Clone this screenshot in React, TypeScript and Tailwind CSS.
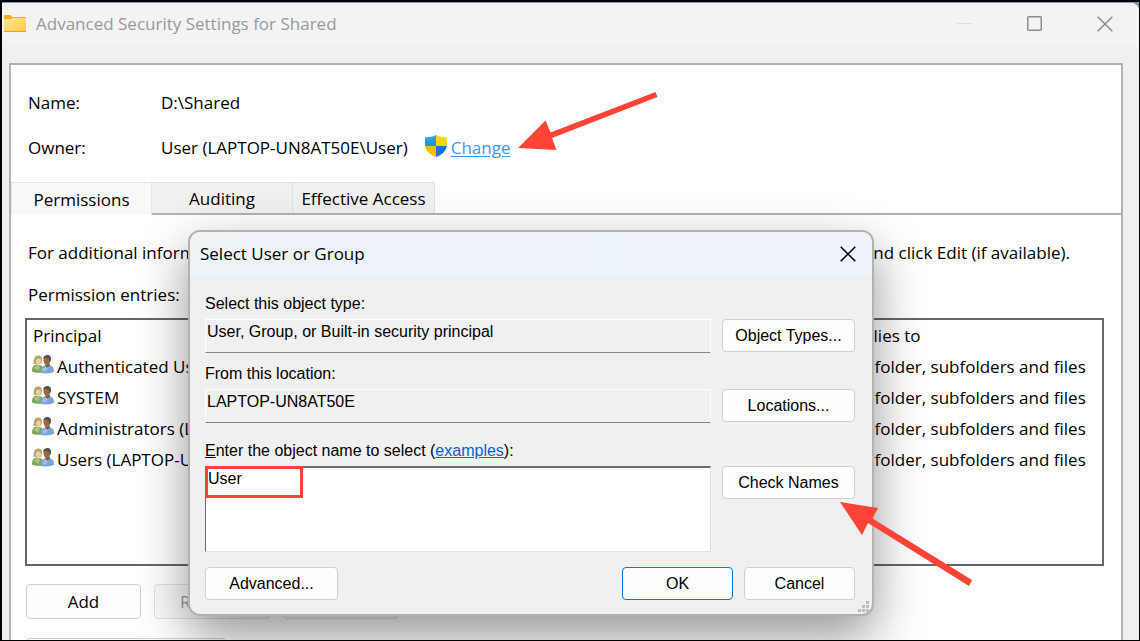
import React from "react";

const entries = [
  "Authenticated Users",
  "SYSTEM",
  "Administrators (LAPTOP-UN8AT50E\\Administrators)",
  "Users (LAPTOP-UN8AT50E\\Users)",
];

function FolderIcon() {
  return (
    <svg width="22" height="18" viewBox="0 0 22 18" aria-hidden="true">
      <defs>
        <linearGradient id="folder" x1="0" y1="0" x2="1" y2="1">
          <stop offset="0" stopColor="#ffe79b" />
          <stop offset="1" stopColor="#fcca3e" />
        </linearGradient>
      </defs>
      <path d="M0 1.2Q0 0 1.2 0H6.4L8.4 2H21Q22 2 22 3V16H0Z" fill="#f5b01d" />
      <path d="M0 4.2H7L8.6 3H22V16.4H0Z" fill="url(#folder)" />
      <path d="M0 16H22V17H0Z" fill="#e6a11c" />
    </svg>
  );
}

function ShieldIcon() {
  return (
    <svg width="22" height="22" viewBox="0 0 22 22" aria-hidden="true">
      <defs>
        <clipPath id="shield">
          <path d="M11 0C14 1.8 18 2.4 22 2.4V9C22 15.5 17 20 11 22C5 20 0 15.5 0 9V2.4C4 2.4 8 1.8 11 0Z" />
        </clipPath>
        <linearGradient id="shieldBlue" x1="0" y1="0" x2="0" y2="1">
          <stop offset="0" stopColor="#2ba8ea" />
          <stop offset="1" stopColor="#1b93dc" />
        </linearGradient>
      </defs>
      <g clipPath="url(#shield)">
        <rect width="11" height="11" fill="url(#shieldBlue)" />
        <rect x="11" width="11" height="11" fill="#ffd500" />
        <rect y="11" width="11" height="11" fill="#fdbc06" />
        <rect x="11" y="11" width="11" height="11" fill="#0f7ad2" />
      </g>
    </svg>
  );
}

function UsersIcon() {
  return (
    <svg width="22" height="19" viewBox="0 0 22 19" aria-hidden="true" className="shrink-0">
      <path d="M0 16.5C0 12 1.5 10 5 9.6L10 10.8L11 17.2C7 18.2 3 18 0 16.5Z" fill="#7da655" />
      <path d="M1.8 13C3 11 4.5 10.4 6 10.2L8 12L6.5 16Z" fill="#a4c77e" />
      <path d="M1.4 8.6C2.2 7 1.2 1 5.6 0.6C8.6 0.3 10.2 2 10 5L9.2 9H3Z" fill="#b9a565" />
      <path d="M4 5C5 3.4 7 3 8.6 4C9.2 7 8.4 10 6.8 10.8C5 10.4 3.8 7.5 4 5Z" fill="#e9cfae" />
      <path d="M8.5 17.8C8.3 13.5 10 11.4 13.5 10.6L18 10.2C21 11 22 13.5 22 16.8C18.5 18.6 12 19 8.5 17.8Z" fill="#7ba5d6" />
      <path d="M10.2 15C10.8 12.8 12.5 12 14.5 11.6L16 13.6L13 17.2Z" fill="#9dbfe3" />
      <path d="M13.4 9L17.6 8.2L17.8 10.8L15.4 12.4L13.4 11Z" fill="#805334" />
      <path d="M11.4 5C11.2 2.4 13 1 15.2 1C17.6 1 18.6 3 18.2 6C17.8 8.4 16.6 10.4 14.8 10.4C12.8 10 11.6 7.5 11.4 5Z" fill="#9a6b47" />
      <path d="M11.2 3.6C11.4 1.2 13.2 0 15.4 0C18.4 0 19.6 2.4 18.8 5.8L17.6 7.4L16.8 4L14 2.8Z" fill="#55504d" />
    </svg>
  );
}

function CloseGlyph() {
  return (
    <svg width="16" height="16" viewBox="0 0 16 16" fill="none" stroke="currentColor" strokeWidth="1.5" aria-hidden="true">
      <path d="M0.7 0.7L15.3 15.3M15.3 0.7L0.7 15.3" />
    </svg>
  );
}

function DialogButton({ children, className = "" }: { children: React.ReactNode; className?: string }) {
  return (
    <button
      type="button"
      className={`h-[33px] rounded border bg-[#fdfdfd] text-base leading-5 text-black ${className}`}
    >
      {children}
    </button>
  );
}

function SelectDialog() {
  return (
    <section
      role="dialog"
      aria-labelledby="dialog-title"
      className="absolute top-[228px] left-[186px] w-[686px] overflow-hidden rounded-xl border-2 border-[#b2b2b2] bg-[#f0f0f0] shadow-[0_20px_50px_rgba(0,0,0,0.42)]"
    >
      <header className="flex h-[43px] items-center justify-between bg-linear-to-r from-[#edf3f7] to-[#eef3fc] pr-4 pl-[10px]">
        <h2 id="dialog-title" className="text-[17px] leading-6">Select User or Group</h2>
        <button type="button" aria-label="Close dialog"><CloseGlyph /></button>
      </header>
      <form
        className="pt-[19px] pr-[17px] pb-[14px] pl-[15px] font-['Liberation_Sans',Arial,sans-serif] text-base leading-5"
        onSubmit={(e) => e.preventDefault()}
      >
        <div className="grid grid-cols-[1fr_133px] gap-x-[11px] gap-y-[5px]">
          <label htmlFor="type" className="col-span-2">Select this object type:</label>
          <input
            id="type"
            readOnly
            defaultValue="User, Group, or Built-in security principal"
            className="h-[34px] min-w-0 border border-t-white border-r-white border-b-[#858585] border-l-white pb-[8px] pl-px outline-none"
          />
          <DialogButton className="border-[#d0d0d0]">Object Types...</DialogButton>

          <label htmlFor="location" className="col-span-2 mt-[6px]">From this location:</label>
          <input
            id="location"
            readOnly
            defaultValue="LAPTOP-UN8AT50E"
            className="h-[34px] min-w-0 border border-t-white border-r-white border-b-[#858585] border-l-white pb-[8px] pl-px outline-none"
          />
          <DialogButton className="border-[#d0d0d0]">Locations...</DialogButton>

          <div className="col-span-2 mt-[13px]">
            <label htmlFor="object-name"><span className="underline">E</span>nter the object name to select</label>{" "}
            (<a href="#examples" className="text-[#0066cc] underline">examples</a>):
          </div>
          <div className="relative">
            <textarea
              id="object-name"
              defaultValue="User"
              className="block h-[86px] w-full resize-none border border-t-2 border-t-[#6d6d6d] border-r-[#e3e3e3] border-b-[#e3e3e3] border-l-[#6d6d6d] bg-white pt-px pl-[2px] leading-5 outline-none"
            />
            <span className="pointer-events-none absolute top-0 left-0 h-8 w-[98px] border-3 border-[#ff4336]" />
          </div>
          <DialogButton className="border-[#d0d0d0]">Check Names</DialogButton>
        </div>
        <div className="mt-[15px] flex gap-[11px]">
          <DialogButton className="mr-auto w-[133px] border-[#d0d0d0]">Advanced...</DialogButton>
          <DialogButton className="w-[111px] border-[#0078d4]">OK</DialogButton>
          <DialogButton className="w-[111px] border-[#d0d0d0]">Cancel</DialogButton>
        </div>
      </form>
      <svg className="absolute right-[3px] bottom-[2px]" width="11" height="11" viewBox="0 0 11 11" fill="#bcbcbc" aria-hidden="true">
        <path d="M8 0h3v3h-3zM4 4h3v3h-3zM8 4h3v3h-3zM0 8h3v3h-3zM4 8h3v3h-3zM8 8h3v3h-3z" />
      </svg>
    </section>
  );
}

export default function App() {
  return (
    <div className="h-screen overflow-hidden border-2 border-r border-b border-black bg-[#7c98ae] pt-px font-['Open_Sans','Noto_Sans',sans-serif] text-[17px] leading-6 text-black">
      <main className="h-full overflow-hidden rounded-tr-lg bg-[#f0f0f0]">
        <header className="flex h-[41px] items-center bg-[#f3f3f3] pl-[2px] text-[#999]">
          <FolderIcon />
          <h1 className="ml-[10px] flex-1 whitespace-nowrap">Advanced Security Settings for Shared</h1>
          <button type="button" aria-label="Minimize" disabled className="flex w-[70px] justify-center">
            <svg width="15" height="1" aria-hidden="true"><path d="M0 0h15v1H0z" fill="#dedede" /></svg>
          </button>
          <button type="button" aria-label="Maximize" className="flex w-[70px] justify-center">
            <svg width="15" height="15" fill="none" stroke="#8c8c8c" strokeWidth="1.5" aria-hidden="true">
              <rect x="0.75" y="0.75" width="13.5" height="13.5" rx="1" />
            </svg>
          </button>
          <button type="button" aria-label="Close" className="flex w-[70px] justify-center pl-[2px] text-[#8c8c8c]"><CloseGlyph /></button>
        </header>
        <div className="h-[2px] bg-[#f3f3f3]" />

        <div className="mt-[17px] mr-4 ml-[7px] h-full border-2 border-[#b2b2b2] bg-white pt-[26px]">
          <dl className="grid grid-cols-[133px_1fr] gap-y-[21px] pl-[17px]">
            <dt>Name:</dt>
            <dd>D:\Shared</dd>
            <dt>Owner:</dt>
            <dd className="flex h-6 items-center whitespace-nowrap">
              User (LAPTOP-UN8AT50E\User)
              <span className="mr-1 mb-1 ml-[17px]"><ShieldIcon /></span>
              <a href="#change" className="text-[#3d97f7] underline underline-offset-2">Change</a>
            </dd>
          </dl>

          <div role="tablist" className="mt-[22px] flex h-[33px]">
            <button type="button" role="tab" aria-selected="true" className="w-[141px] border-t border-r border-l border-[#e5e5e5] bg-[#f9f9f9] pt-[2px]">
              Permissions
            </button>
            <div className="flex flex-1 border-b-2 border-[#b2b2b2]">
              <button type="button" role="tab" aria-selected="false" className="w-[141px] border-t border-r border-[#e0e0e0] bg-[#f0f0f0] pt-px">
                Auditing
              </button>
              <button type="button" role="tab" aria-selected="false" className="w-[142px] border-t border-r border-[#e0e0e0] bg-[#f0f0f0] pt-px whitespace-nowrap">
                Effective Access
              </button>
            </div>
          </div>

          <p className="mt-[26px] mr-[51px] ml-[17px] flex justify-between whitespace-nowrap">
            <span>For additional information, double-click a permission entry.</span>
            <span className="flex w-0 flex-1 justify-end overflow-hidden">To modify, select the entry and click Edit (if available).</span>
          </p>
          <p className="mt-[18px] ml-[17px]">Permission entries:</p>

          <div className="mt-[11px] mr-[17px] ml-[14px] h-[248px] border-2 border-[#666]">
            <table className="w-full table-fixed text-left">
              <thead>
                <tr className="h-[31px]">
                  <th className="pl-[6px] font-normal">Principal</th>
                  <th className="w-[264px] pl-1 font-normal">Applies to</th>
                </tr>
              </thead>
              <tbody>
                {entries.map((name) => (
                  <tr key={name} className="h-[31px] whitespace-nowrap">
                    <td className="pl-[5px]">
                      <span className="flex h-6 items-center gap-[3px]"><span className="pb-1"><UsersIcon /></span>{name}</span>
                    </td>
                    <td>This folder, subfolders and files</td>
                  </tr>
                ))}
              </tbody>
            </table>
          </div>

          <div className="mt-[18px] ml-[15px] flex gap-[13px]">
            <button type="button" className="h-[35px] w-[115px] rounded border border-[#d0d0d0] bg-[#fdfdfd]">Add</button>
            <button type="button" disabled className="h-[35px] w-[116px] rounded border border-[#e0e0e0] bg-[#fafafa] text-[#9a9a9a]">Remove</button>
            <button type="button" disabled className="h-[35px] w-[115px] rounded border border-[#e0e0e0] bg-[#fafafa] text-[#9a9a9a]">View</button>
          </div>
          <button type="button" aria-label="Disable inheritance" className="mt-[19px] ml-[15px] h-[35px] w-[200px] rounded border border-[#d0d0d0] bg-[#fdfdfd]" />
        </div>
      </main>

      <div className="absolute top-[2px] left-[2px] h-[calc(100vh-3px)] w-[calc(100vw-3px)] overflow-hidden">
        <SelectDialog />
        <svg className="pointer-events-none absolute top-[90px] left-[516px]" width="142" height="62" viewBox="0 0 142 62" aria-hidden="true">
          <path d="M0 56L27.5 28.5L32.5 40.5L137.5 0L139.5 5L34 46L38.5 58Z" fill="#ff4336" />
        </svg>
        <svg className="pointer-events-none absolute top-[500px] left-[838px]" width="134" height="86" viewBox="0 0 134 86" aria-hidden="true">
          <path d="M0 0L38 6L32.5 16.5L132 78L129 84L28 21L22 33Z" fill="#ff4336" />
        </svg>
      </div>
    </div>
  );
}
